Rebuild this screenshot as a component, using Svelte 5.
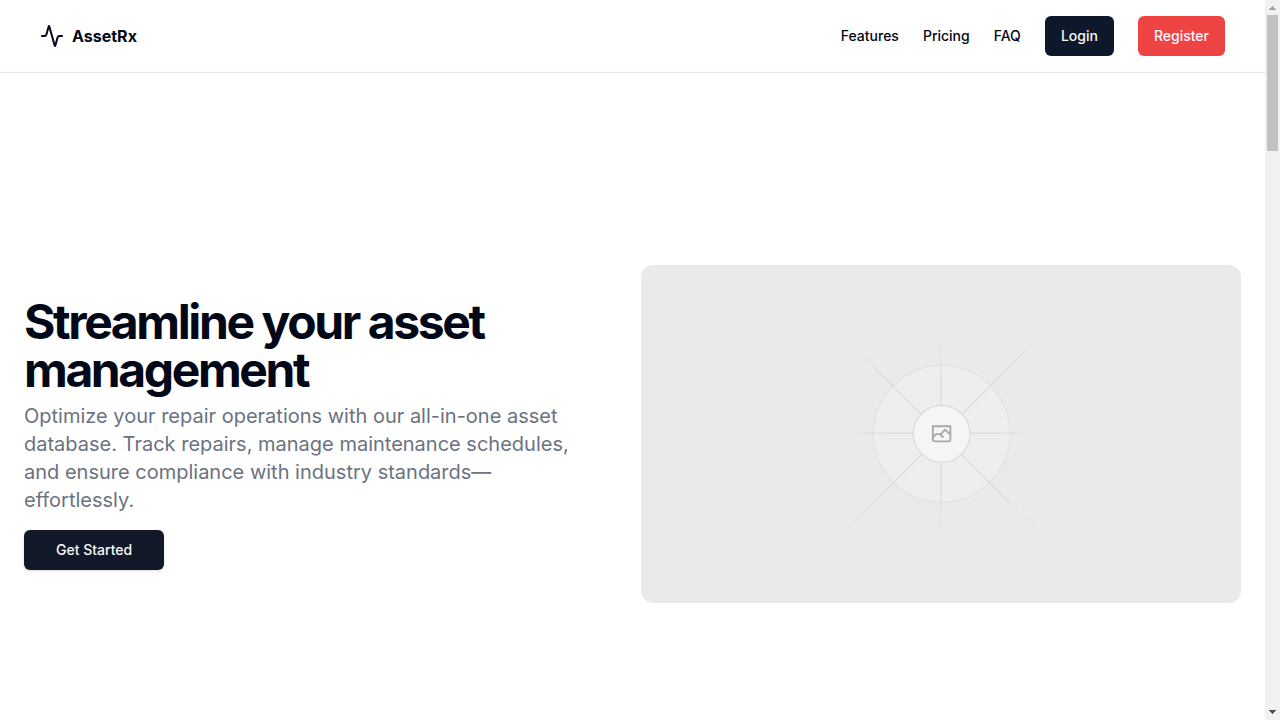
<script>
  const links = ['Features', 'Pricing', 'FAQ'];
  const rays = [
    { id: 'ray-a', x1: 554.061, x2: -0.48, y1: 0.083, y2: 0.087, d: 'M0-1.209h553.581', transform: 'scale(1 -1) rotate(45 1163.11 91.165)' },
    { id: 'ray-b', x1: 796.912, x2: 404.507, y1: 599.963, y2: 599.965, d: 'M404.846 598.671h391.726' },
    { id: 'ray-c', x1: 600.792, x2: 600.794, y1: 403.677, y2: 796.082, d: 'M599.5 795.742V404.017' },
    { id: 'ray-d', x1: 404.85, x2: 796.972, y1: 403.903, y2: 796.02, d: 'm795.717 796.597-391.441-391.44' }
  ];
</script>

<div class="window">
  <div class="page">
    <header>
      <a class="brand" href="#top">
        <svg width="24" height="24" viewBox="0 0 24 24" fill="none" stroke="currentColor" stroke-width="2" stroke-linecap="round" stroke-linejoin="round" aria-hidden="true">
          <path d="M22 12h-2.48a2 2 0 0 0-1.93 1.46l-2.35 8.36a.25.25 0 0 1-.48 0L9.24 2.18a.25.25 0 0 0-.48 0l-2.35 8.36A2 2 0 0 1 4.49 12H2" />
        </svg>
        <span>AssetRx</span>
      </a>
      <nav>
        {#each links as link}
          <a href="#{link.toLowerCase()}">{link}</a>
        {/each}
        <a class="button login" href="#login">Login</a>
        <a class="button register" href="#register">Register</a>
      </nav>
    </header>

    <main>
      <div class="copy">
        <h1>Streamline your asset management</h1>
        <p>Optimize your repair operations with our all-in-one asset database. Track repairs, manage maintenance schedules, and ensure compliance with industry standards—effortlessly.</p>
        <a class="button start" href="#start">Get Started</a>
      </div>
      <svg class="preview" viewBox="0 262.5 1200 675" fill="none" preserveAspectRatio="xMidYMid slice" aria-hidden="true">
        <defs>
          {#each rays as ray}
            <linearGradient id={ray.id} x1={ray.x1} x2={ray.x2} y1={ray.y1} y2={ray.y2} gradientUnits="userSpaceOnUse">
              <stop stop-color="#c9c9c9" stop-opacity="0" />
              <stop offset=".208" stop-color="#c9c9c9" />
              <stop offset=".792" stop-color="#c9c9c9" />
              <stop offset="1" stop-color="#c9c9c9" stop-opacity="0" />
            </linearGradient>
          {/each}
        </defs>
        <rect y="262" width="1200" height="677" fill="#eaeaea" />
        <g opacity=".5">
          <circle cx="600.709" cy="599.88" r="136.62" fill="#fafafa" stroke="#c9c9c9" stroke-width="2.418" opacity=".5" />
          {#each rays as ray}
            <path d={ray.d} transform={ray.transform} stroke="url(#{ray.id})" stroke-width="2.418" />
          {/each}
          <circle cx="600.709" cy="599.88" r="56.825" fill="#fff" />
          <path fill="#666" fill-rule="evenodd" clip-rule="evenodd" d="M616.426 586.58h-31.434v16.176l3.553-3.554.531-.531h9.068l.074-.074 8.463-8.463h2.565l7.18 7.181V586.58Zm-15.715 14.654 3.698 3.699 1.283 1.282-2.565 2.565-1.282-1.283-5.2-5.199h-6.066l-5.514 5.514-.073.073v2.876a2.418 2.418 0 0 0 2.418 2.418h26.598a2.418 2.418 0 0 0 2.418-2.418v-8.317l-8.463-8.463-7.181 7.181-.071.072Zm-19.347 5.442v4.085a6.045 6.045 0 0 0 6.046 6.045h26.598a6.044 6.044 0 0 0 6.045-6.045v-7.108l1.356-1.355-1.282-1.283-.074-.073v-17.989h-38.689v23.43l-.146.146.146.147Z" />
          <circle cx="600.709" cy="599.88" r="56.825" stroke="#c9c9c9" stroke-width="2.418" />
        </g>
      </svg>
    </main>
  </div>

  <div class="scrollbar" aria-hidden="true">
    <svg width="15" height="15" shape-rendering="crispEdges"><path fill="#a3a3a3" d="M7 6h1v1h1v1h1v1h1v1H4V9h1V8h1V7h1z" /></svg>
    <div class="thumb"></div>
    <svg class="down" width="15" height="15" shape-rendering="crispEdges"><path fill="#505050" d="M4 5h7v1h-1v1H9v1H8v1H7V8H6V7H5V6H4z" /></svg>
  </div>
</div>

<style>
  :global(body) {
    margin: 0;
    overflow: hidden;
    background: #fff;
  }
  .window {
    display: flex;
    height: 720px;
    overflow: hidden;
    color: #020817;
    font-family: Inter, sans-serif;
  }
  .window * {
    box-sizing: border-box;
  }
  .page {
    flex: 1;
    min-width: 0;
    height: 720px;
    overflow: hidden;
  }
  header {
    display: flex;
    align-items: center;
    justify-content: space-between;
    height: 73px;
    padding: 0 40px;
    border-bottom: 1px solid #e2e8f0;
  }
  a {
    color: inherit;
    text-decoration: none;
  }
  .brand {
    display: flex;
    align-items: center;
    gap: 8px;
    font-size: 16px;
    line-height: 24px;
    font-weight: 700;
  }
  nav {
    display: flex;
    align-items: center;
    gap: 24px;
    font-size: 14px;
    line-height: 20px;
    font-weight: 500;
  }
  .button {
    display: inline-flex;
    align-items: center;
    justify-content: center;
    height: 40px;
    padding: 0 16px;
    border-radius: 6px;
    color: #f8fafc;
    font-size: 14px;
    line-height: 20px;
    font-weight: 500;
  }
  .login {
    background: #0f172a;
  }
  .register {
    background: #ef4444;
  }
  main {
    display: grid;
    grid-template-columns: 1fr 1fr;
    gap: 16px;
    align-items: center;
    height: 722px;
    padding: 0 24px;
  }
  .copy {
    display: flex;
    flex-direction: column;
    align-items: flex-start;
  }
  h1 {
    margin: 0 0 8px;
    font-size: 48px;
    line-height: 48px;
    font-weight: 700;
    letter-spacing: -0.05em;
  }
  p {
    max-width: 576px;
    margin: 0 0 16px;
    color: #6b7280;
    font-size: 20px;
    line-height: 28px;
  }
  .start {
    padding: 0 32px;
    background: #111827;
    box-shadow: 0 1px 2px rgba(0, 0, 0, 0.05), 0 1px 3px rgba(0, 0, 0, 0.1);
  }
  .preview {
    display: block;
    width: 100%;
    aspect-ratio: 16 / 9;
    border-radius: 12px;
    overflow: hidden;
  }
  .scrollbar {
    display: flex;
    flex-direction: column;
    flex: 0 0 15px;
    height: 720px;
    background: #f1f1f1;
  }
  .scrollbar svg {
    display: block;
    flex: none;
  }
  .thumb {
    height: 136px;
    margin: 0 2px;
    background: #c1c1c1;
  }
  .down {
    margin-top: auto;
  }
</style>
